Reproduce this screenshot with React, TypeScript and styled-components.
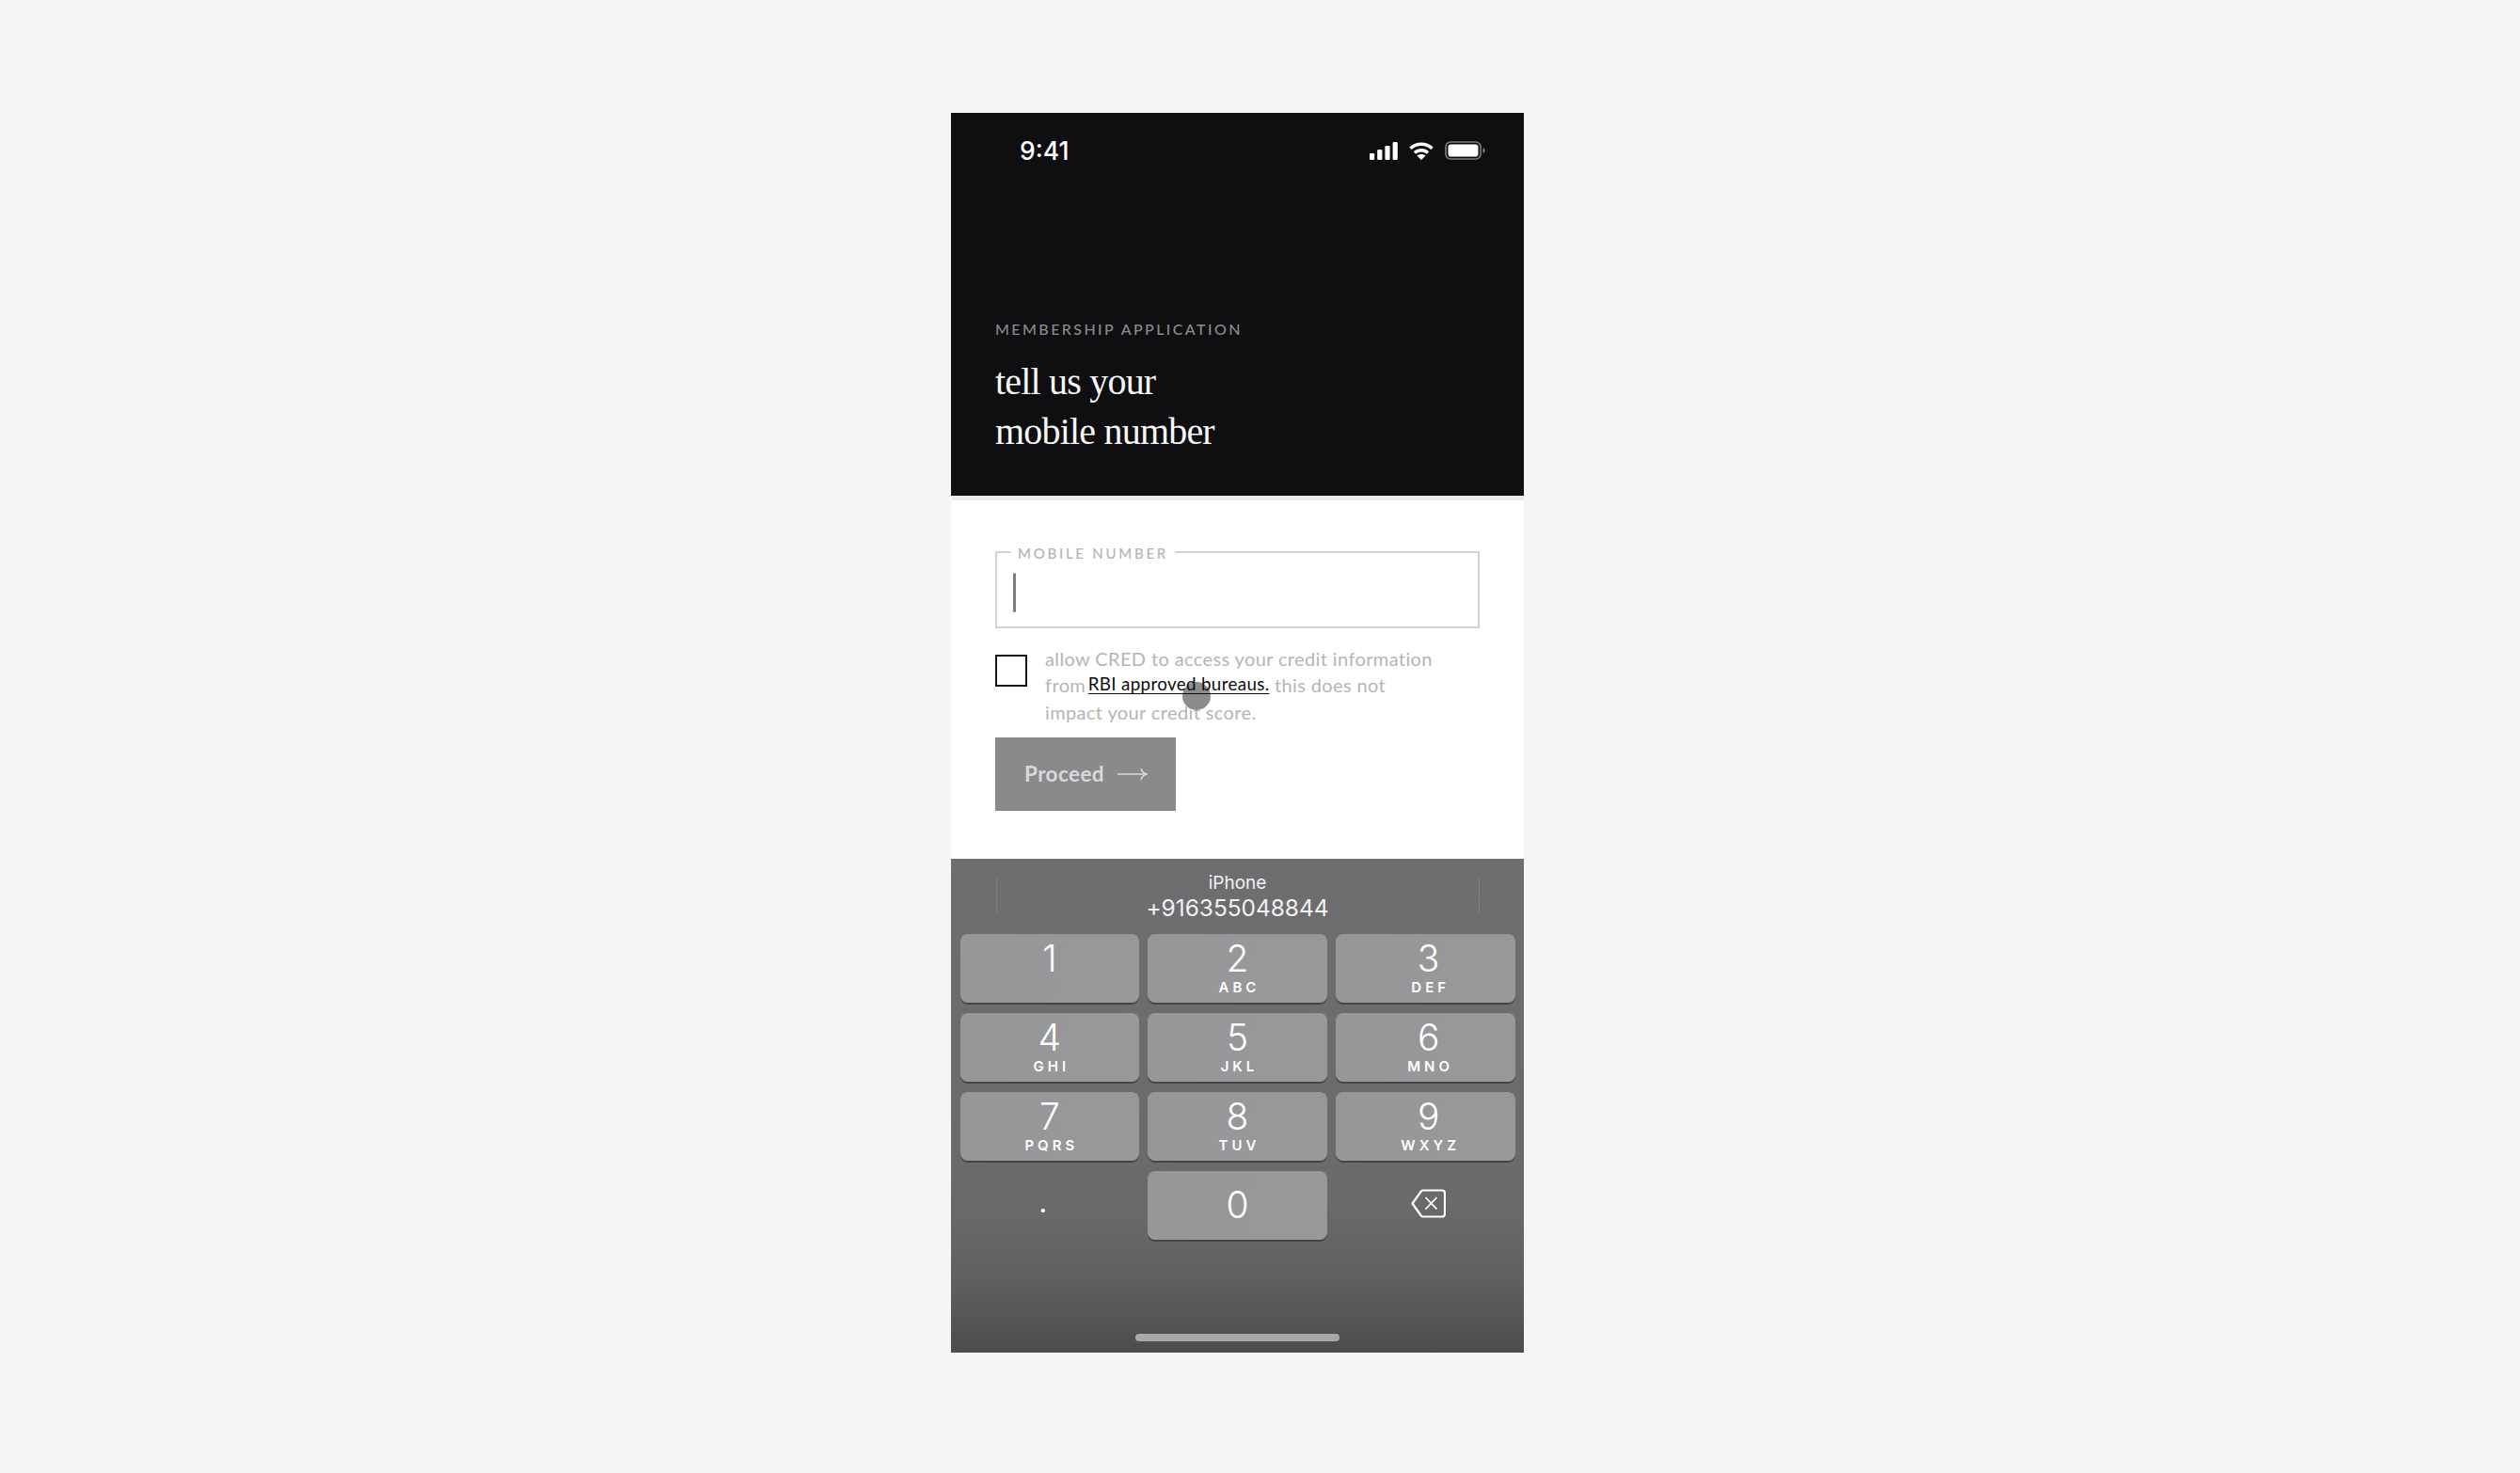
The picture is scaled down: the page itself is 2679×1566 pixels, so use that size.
import React from "react";
import styled, { createGlobalStyle } from "styled-components";

const GlobalStyle = createGlobalStyle`
  html, body {
    margin: 0;
    background: #f5f5f5;
  }
`;

const SERIF = `"Liberation Serif", serif`;
const GEO = `Lato, "Noto Sans", sans-serif`;
const IOS = `Inter, "Liberation Sans", sans-serif`;

const Page = styled.div`
  box-sizing: border-box;
  width: 2679px;
  height: 1566px;
  padding: 120px 0 0 1011px;
  overflow: hidden;
`;

const Phone = styled.div`
  position: relative;
  width: 609px;
  height: 1318px;
  display: flex;
  flex-direction: column;
  background: #fff;
`;

//header
const Header = styled.header`
  box-sizing: border-box;
  height: 407px;
  background: #0f0e11;
  padding-bottom: 42px;
  display: flex;
  flex-direction: column;
`;

const StatusBar = styled.div`
  display: flex;
  align-items: center;
  justify-content: space-between;
  height: 20px;
  margin-top: 30px;
  padding: 0 41px 0 73px;
`;

const Clock = styled.span`
  font: 500 26.5px/20px ${IOS};
  color: #fff;
`;

const StatusIcons = styled.div`
  display: flex;
  align-items: center;
  gap: 12px;
`;

const HeaderText = styled.div`
  margin-top: auto;
  padding-left: 47px;
`;

const Eyebrow = styled.div`
  font: 500 16px/20px ${GEO};
  letter-spacing: 2.42px;
  color: #8c8c90;
  white-space: nowrap;
`;

const Title = styled.h1`
  margin: 19px 0 0;
  font: 400 40px/53px ${SERIF};
  letter-spacing: -0.8px;
  color: #f6f6f6;
`;

const Divider = styled.div`
  height: 5px;
  margin-left: 1px;
  background: #ebebeb;
`;

//form
const Form = styled.section`
  height: 381px;
  box-sizing: border-box;
  padding: 53px 47px 0;
  display: flex;
  flex-direction: column;
  align-items: flex-start;
`;

const Field = styled.fieldset`
  box-sizing: border-box;
  width: 515px;
  height: 88px;
  margin: -5px 0 0;
  padding: 0 0 0 17px;
  border: 2px solid #d2d2d3;
`;

const FieldLabel = styled.legend`
  position: relative;
  top: 1px;
  margin-left: -2px;
  padding: 0 7px;
  font: 500 15px/14px ${GEO};
  letter-spacing: 2.72px;
  color: #b3b3b5;
  white-space: nowrap;
`;

const Caret = styled.div`
  width: 3px;
  height: 42px;
  margin-top: 15px;
  border-radius: 1.5px;
  background: #7d7d80;
`;

const Consent = styled.div`
  display: flex;
  align-items: flex-start;
  gap: 19px;
  margin-top: 23px;
`;

const CheckBox = styled.div`
  box-sizing: border-box;
  flex: none;
  width: 34px;
  height: 34px;
  margin-top: 5px;
  border: 2px solid #15151a;
`;

const ConsentText = styled.p`
  width: 460px;
  margin: -5px 0 0;
  font: 400 20px/28px ${GEO};
  letter-spacing: 0.38px;
  color: #b5b5b7;
`;

const BureauLink = styled.a`
  position: relative;
  z-index: 1;
  top: -2px;
  margin-left: -3px;
  font-size: 18.8px;
  letter-spacing: 0.34px;
  color: #0c0c0f;
  text-decoration: underline;
  text-underline-offset: 3px;
  text-decoration-thickness: 1px;
`;

const ProceedButton = styled.button`
  display: flex;
  align-items: center;
  gap: 14px;
  width: 192px;
  height: 78px;
  margin-top: 13px;
  padding: 0 0 0 31px;
  border: none;
  background: #8a898c;
  font: 700 22.5px/1 ${GEO};
  letter-spacing: 0.4px;
  color: #d9d9da;
`;

const TouchDot = styled.div`
  position: absolute;
  left: 246px;
  top: 605px;
  width: 30px;
  height: 30px;
  border-radius: 50%;
  background: rgba(130, 130, 133, 0.92);
`;

//keyboard
const Keyboard = styled.section`
  flex: 1;
  position: relative;
  box-sizing: border-box;
  padding: 0 9.5px;
  background: linear-gradient(
    to bottom,
    #6e6d70 0%,
    #6a696c 70%,
    #605f62 85%,
    #4c4b4d 100%
  );
`;

const Suggestion = styled.div`
  box-sizing: border-box;
  height: 80px;
  margin: 0 38px;
  padding-top: 14px;
  text-align: center;
  color: #f2f2f3;
  position: relative;

  &::before,
  &::after {
    content: "";
    position: absolute;
    top: 20px;
    width: 1px;
    height: 38px;
    background: #807f82;
  }
  &::before {
    left: 0;
  }
  &::after {
    right: 0;
  }
`;

const SuggestionName = styled.div`
  font: 400 19px/24px ${IOS};
`;

const SuggestionNumber = styled.div`
  font: 400 24.5px/29px ${IOS};
  letter-spacing: -0.05px;
`;

const KeyGrid = styled.div`
  display: grid;
  grid-template-columns: repeat(3, 1fr);
  grid-auto-rows: 73px;
  gap: 11px 9px;
`;

const Key = styled.div<{ $plain?: boolean }>`
  box-sizing: border-box;
  display: flex;
  flex-direction: column;
  align-items: center;
  border-radius: 8px;
  color: #fff;
  background: ${(p) =>
    p.$plain ? "transparent" : "linear-gradient(100deg, #979698, #98979a)"};
  box-shadow: ${(p) => (p.$plain ? "none" : "0 2px 0 #454446")};

  &:nth-child(3n) {
    padding-left: 7px;
  }
`;

const Digit = styled.span<{ $center?: boolean }>`
  font: 300 39px/39px ${IOS};
  margin-top: ${(p) => (p.$center ? "16px" : "6px")};
`;

const Letters = styled.span`
  font: 600 15px/15px ${IOS};
  letter-spacing: 4px;
  margin-top: 4px;
  padding-left: 4px;
`;

const DotKey = styled.span`
  font: 700 24px/24px ${IOS};
  margin: 24px 14px 0 0;
`;

const BackIcon = styled.svg`
  margin-top: 19px;
`;

const HomeBar = styled.div`
  position: absolute;
  left: 196px;
  bottom: 12px;
  width: 217px;
  height: 8px;
  border-radius: 4px;
  background: #a9a9aa;
`;

const SignalIcon = () => (
  <svg width="30" height="19" viewBox="0 0 30 19" fill="#fff">
    <rect x="0" y="12" width="5.2" height="7" rx="1.2" />
    <rect x="8.2" y="8" width="5.2" height="11" rx="1.2" />
    <rect x="16.4" y="4" width="5.2" height="15" rx="1.2" />
    <rect x="24.6" y="0" width="5.2" height="19" rx="1.2" />
  </svg>
);

const WifiIcon = () => (
  <svg width="26" height="19" viewBox="0 0 26 19" fill="none" stroke="#fff" strokeWidth="3.6">
    <path d="M1.500 6.800C8 .8 18 .8 24.500 6.800" />
    <path d="M6 11.500C10 7.900 16 7.900 20 11.500" />
    <path d="M13 19l-4.600-4.600c2.500-2 6.700-2 9.200 0z" fill="#fff" stroke="none" />
  </svg>
);

const BatteryIcon = () => (
  <svg width="43" height="20" viewBox="0 0 43 20" fill="none">
    <rect x="1" y="1" width="37" height="18" rx="5" stroke="#7f7f82" strokeWidth="1.6" />
    <rect x="3.500" y="3.500" width="32" height="13" rx="2.800" fill="#fff" />
    <path d="M40.500 7c1.300.5 2 1.600 2 3s-.7 2.500-2 3z" fill="#7f7f82" />
  </svg>
);

const ArrowIcon = () => (
  <svg width="32" height="16" viewBox="0 0 32 16" fill="none" stroke="#d9d9da" strokeWidth="1.5">
    <path d="M0 8h31" />
    <path d="M25 2c.8 3 3 5.200 6 6-3 .8-5.200 3-6 6" />
  </svg>
);

const BackspaceIcon = () => (
  <BackIcon width="37" height="31" viewBox="0 0 37 31" fill="none" stroke="#fff" strokeWidth="2.2">
    <path
      d="M13 1.500H33a3 3 0 0 1 3 3V26.500a3 3 0 0 1-3 3H13a3 3 0 0 1-2.200-1L1.500 15.500 10.800 2.500A3 3 0 0 1 13 1.500Z"
      strokeLinejoin="round"
    />
    <path d="M15.500 9l12 12.500M27.500 9l-12 12.500" strokeWidth="1.8" />
  </BackIcon>
);

const KEYS = [
  ["1", ""],
  ["2", "ABC"],
  ["3", "DEF"],
  ["4", "GHI"],
  ["5", "JKL"],
  ["6", "MNO"],
  ["7", "PQRS"],
  ["8", "TUV"],
  ["9", "WXYZ"],
];

export default function App() {
  return (
    <Page>
      <GlobalStyle />
      <Phone>
        <Header>
          <StatusBar>
            <Clock>9:41</Clock>
            <StatusIcons>
              <SignalIcon />
              <WifiIcon />
              <BatteryIcon />
            </StatusIcons>
          </StatusBar>
          <HeaderText>
            <Eyebrow>MEMBERSHIP APPLICATION</Eyebrow>
            <Title>
              tell us your
              <br />
              mobile number
            </Title>
          </HeaderText>
        </Header>
        <Divider />
        <Form>
          <Field>
            <FieldLabel>MOBILE NUMBER</FieldLabel>
            <Caret />
          </Field>
          <Consent>
            <CheckBox />
            <ConsentText>
              allow CRED to access your credit information
              <br />
              from <BureauLink>RBI approved bureaus.</BureauLink> this does not
              <br />
              impact your credit score.
            </ConsentText>
          </Consent>
          <ProceedButton>
            Proceed
            <ArrowIcon />
          </ProceedButton>
        </Form>
        <TouchDot />
        <Keyboard>
          <Suggestion>
            <SuggestionName>iPhone</SuggestionName>
            <SuggestionNumber>+916355048844</SuggestionNumber>
          </Suggestion>
          <KeyGrid>
            {KEYS.map(([digit, letters]) => (
              <Key key={digit}>
                <Digit>{digit}</Digit>
                {letters && <Letters>{letters}</Letters>}
              </Key>
            ))}
            <Key $plain>
              <DotKey>.</DotKey>
            </Key>
            <Key>
              <Digit $center>0</Digit>
            </Key>
            <Key $plain>
              <BackspaceIcon />
            </Key>
          </KeyGrid>
          <HomeBar />
        </Keyboard>
      </Phone>
    </Page>
  );
}
